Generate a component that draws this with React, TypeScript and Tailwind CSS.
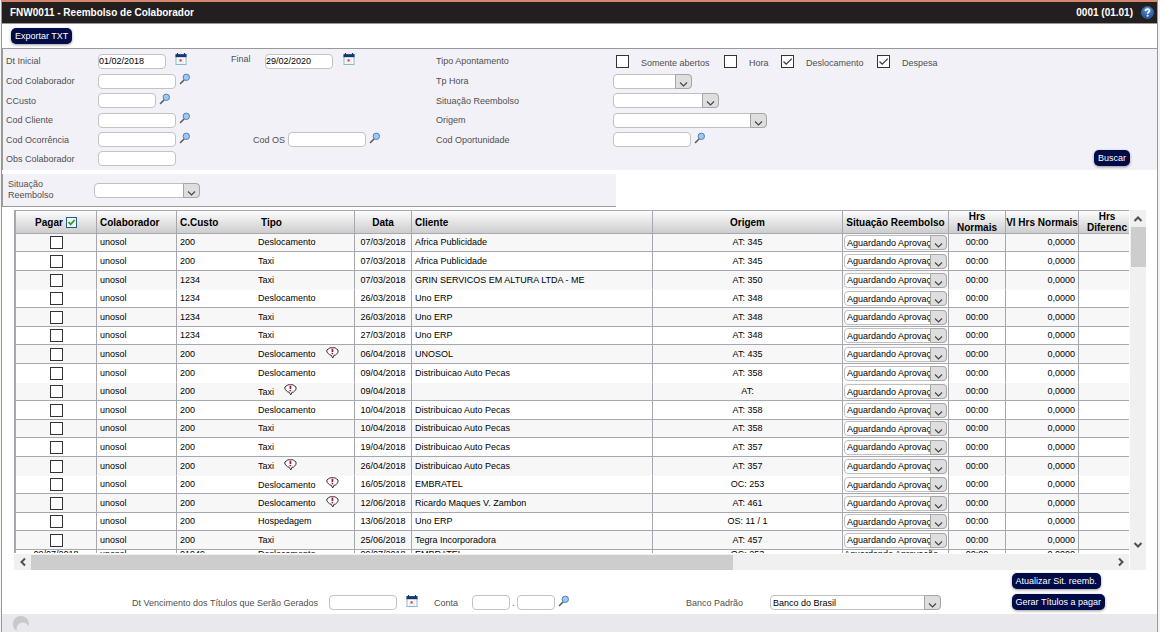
import React from 'react';
import clsx from 'clsx';

interface Lancamento {
  custo: string;
  tipo: string;
  alerta?: boolean;
  data: string;
  cliente: string;
  origem: string;
}

const lancamentos: Lancamento[] = [
  { custo: '200', tipo: 'Deslocamento', data: '07/03/2018', cliente: 'Africa Publicidade', origem: 'AT: 345' },
  { custo: '200', tipo: 'Taxi', data: '07/03/2018', cliente: 'Africa Publicidade', origem: 'AT: 345' },
  { custo: '1234', tipo: 'Taxi', data: '07/03/2018', cliente: 'GRIN SERVICOS EM ALTURA LTDA - ME', origem: 'AT: 350' },
  { custo: '1234', tipo: 'Deslocamento', data: '26/03/2018', cliente: 'Uno ERP', origem: 'AT: 348' },
  { custo: '1234', tipo: 'Taxi', data: '26/03/2018', cliente: 'Uno ERP', origem: 'AT: 348' },
  { custo: '1234', tipo: 'Taxi', data: '27/03/2018', cliente: 'Uno ERP', origem: 'AT: 348' },
  { custo: '200', tipo: 'Deslocamento', alerta: true, data: '06/04/2018', cliente: 'UNOSOL', origem: 'AT: 435' },
  { custo: '200', tipo: 'Deslocamento', data: '09/04/2018', cliente: 'Distribuicao Auto Pecas', origem: 'AT: 358' },
  { custo: '200', tipo: 'Taxi', alerta: true, data: '09/04/2018', cliente: '', origem: 'AT:' },
  { custo: '200', tipo: 'Deslocamento', data: '10/04/2018', cliente: 'Distribuicao Auto Pecas', origem: 'AT: 358' },
  { custo: '200', tipo: 'Taxi', data: '10/04/2018', cliente: 'Distribuicao Auto Pecas', origem: 'AT: 358' },
  { custo: '200', tipo: 'Taxi', data: '19/04/2018', cliente: 'Distribuicao Auto Pecas', origem: 'AT: 357' },
  { custo: '200', tipo: 'Taxi', alerta: true, data: '26/04/2018', cliente: 'Distribuicao Auto Pecas', origem: 'AT: 357' },
  { custo: '200', tipo: 'Deslocamento', alerta: true, data: '16/05/2018', cliente: 'EMBRATEL', origem: 'OC: 253' },
  { custo: '200', tipo: 'Deslocamento', alerta: true, data: '12/06/2018', cliente: 'Ricardo Maques V. Zambon', origem: 'AT: 461' },
  { custo: '200', tipo: 'Hospedagem', data: '13/06/2018', cliente: 'Uno ERP', origem: 'OS: 11 / 1' },
  { custo: '200', tipo: 'Taxi', data: '25/06/2018', cliente: 'Tegra Incorporadora', origem: 'AT: 457' },
];

const LupaIcon = () => (
  <svg width="12" height="12" viewBox="0 0 12 12" className="block">
    <path d="M4.8 7.2 1.500 10.500" stroke="#5b5b5b" strokeWidth="1.6" strokeLinecap="round" />
    <circle cx="7.3" cy="4.3" r="3.2" fill="#9cc8f4" stroke="#5580b5" strokeWidth="1" />
  </svg>
);

const CalendarioIcon = () => (
  <svg width="12" height="12" viewBox="0 0 12 12" className="block">
    <rect x="1" y="1.5" width="10" height="10" fill="#fbfdff" stroke="#8fb4d4" />
    <path d="M.5 1.2h11v3H.5z" fill="#14386b" />
    <path d="M2.5 0v2M9.5 0v2" stroke="#14386b" strokeWidth="1.2" />
    <path d="M3 6.5h6M3 8.5h6M3 10h6" stroke="#cfe0ee" strokeWidth=".6" />
    <rect x="4.6" y="6.4" width="2" height="2" fill="#c8372d" />
  </svg>
);

const AlertaIcon = () => (
  <svg width="13" height="12" viewBox="0 0 13 12" className="block">
    <path d="M4 .8h5l3 2.2v2.6L9.3 8.2H8L6.8 11 5.2 8.2 3.6 7.8.9 5.2V3z" fill="#fff" stroke="#3a3033" strokeWidth="1" strokeLinejoin="round" />
    <path d="M6.4 1.9v3.2" stroke="#b01030" strokeWidth="1.7" />
    <path d="M6.4 6v1.3" stroke="#b01030" strokeWidth="1.6" />
  </svg>
);

const AjudaIcon = () => (
  <svg width="13" height="13" viewBox="0 0 13 13" className="block">
    <defs>
      <radialGradient id="ajuda" cx="50%" cy="25%" r="75%">
        <stop offset="0" stopColor="#5f9ad6" />
        <stop offset="1" stopColor="#1c4f94" />
      </radialGradient>
    </defs>
    <circle cx="6.5" cy="6.5" r="6" fill="url(#ajuda)" stroke="#3c6cab" strokeWidth=".8" />
    <path d="M4.5 5c0-1.2.8-1.9 2-1.9s2 .7 2 1.700c0 1.3-1.900 1.400-1.900 3" fill="none" stroke="#fff" strokeWidth="1.7" />
    <circle cx="6.6" cy="9.7" r="1" fill="#fff" />
  </svg>
);

const Seta = ({ d }: { d: string }) => (
  <svg width="10" height="10" viewBox="0 0 10 10" className="block">
    <path d={d} fill="none" stroke="#505050" strokeWidth="2" />
  </svg>
);

const Campo = ({ className, ...props }: React.InputHTMLAttributes<HTMLInputElement>) => (
  <input
    type="text"
    className={clsx('h-[15px] rounded border border-[#c3c3c3] bg-white text-[9px] leading-3 text-black', className)}
    {...props}
  />
);

const Combo = ({ id, label, className, opcao = '' }: { id?: string; label?: string; className: string; opcao?: string }) => (
  <span className={clsx('relative block h-[15px]', className)}>
    <select
      id={id}
      aria-label={label}
      className="block h-[15px] w-full appearance-none overflow-hidden rounded border border-[#c0c0c0] bg-white pl-[2px] text-[9px] leading-3 text-black"
    >
      <option>{opcao}</option>
    </select>
    <span className="pointer-events-none absolute inset-y-0 right-0 flex w-[17px] items-end justify-center rounded-r-sm border border-[#a6a6a6] bg-[#dedede]">
      <svg width="9" height="7" viewBox="0 0 9 7">
        <path d="M1 1.5 4.5 5 8 1.5" fill="none" stroke="#444" strokeWidth="1.1" />
      </svg>
    </span>
  </span>
);

const Marca = ({ id, label, marcado }: { id?: string; label?: string; marcado?: boolean }) => (
  <span className="relative block size-[13px] shrink-0">
    <input
      id={id}
      aria-label={label}
      type="checkbox"
      defaultChecked={marcado}
      className="peer block size-[13px] appearance-none border border-[#333] bg-white"
    />
    <svg viewBox="0 0 13 13" className="pointer-events-none absolute inset-0 hidden peer-checked:block">
      <path d="M2.5 6.5 5.2 9.2 10.8 3.6" fill="none" stroke="#333" strokeWidth="1.2" />
    </svg>
  </span>
);

const Botao = ({ children, className }: { children: React.ReactNode; className?: string }) => (
  <button
    type="button"
    className={clsx('h-4 rounded-[5px] bg-[#000b47] px-1 text-[9px] leading-4 whitespace-nowrap text-white shadow-[0_1px_3px_rgba(0,0,0,0.4)]', className)}
  >
    {children}
  </button>
);

const BotaoIcone = ({ label, children, className }: { label: string; children: React.ReactNode; className?: string }) => (
  <button type="button" aria-label={label} className={clsx('shrink-0 pb-1', className)}>
    {children}
  </button>
);

const Filtros = () => (
  <section className="flex border-t border-l border-[#999] bg-[#f1f1f7] py-[2px] pl-[3px]">
    <div className="grid w-[430px] shrink-0 grid-rows-[20px_20px_19px_20px_19px_19px]">
      <div className="flex items-center">
        <div className="flex w-[225px] items-center">
          <label htmlFor="dtInicial" className="w-[92px]">Dt Inicial</label>
          <Campo id="dtInicial" defaultValue="01/02/2018" className="w-[68px]" />
          <BotaoIcone label="Calendário" className="ml-[9px]"><CalendarioIcon /></BotaoIcone>
        </div>
        <label htmlFor="dtFinal" className="w-[34px] pb-1">Final</label>
        <Campo id="dtFinal" defaultValue="29/02/2020" className="w-[68px]" />
        <BotaoIcone label="Calendário" className="ml-[10px]"><CalendarioIcon /></BotaoIcone>
      </div>
      <div className="flex items-center">
        <label htmlFor="colaborador" className="w-[92px]">Cod Colaborador</label>
        <Campo id="colaborador" className="w-[78px]" />
        <BotaoIcone label="Pesquisar" className="ml-[3px]"><LupaIcon /></BotaoIcone>
      </div>
      <div className="flex items-center">
        <label htmlFor="ccusto" className="w-[92px]">CCusto</label>
        <Campo id="ccusto" className="w-[58px]" />
        <BotaoIcone label="Pesquisar" className="ml-[3px]"><LupaIcon /></BotaoIcone>
      </div>
      <div className="flex items-center">
        <label htmlFor="cliente" className="w-[92px]">Cod Cliente</label>
        <Campo id="cliente" className="w-[78px]" />
        <BotaoIcone label="Pesquisar" className="ml-[3px]"><LupaIcon /></BotaoIcone>
      </div>
      <div className="flex items-center">
        <div className="flex w-[225px] items-center">
          <label htmlFor="ocorrencia" className="w-[92px]">Cod Ocorrência</label>
          <Campo id="ocorrencia" className="w-[78px]" />
          <BotaoIcone label="Pesquisar" className="ml-[3px]"><LupaIcon /></BotaoIcone>
        </div>
        <label htmlFor="codOs" className="w-[57px] pr-[3px] text-right">Cod OS</label>
        <Campo id="codOs" className="w-[78px]" />
        <BotaoIcone label="Pesquisar" className="ml-[3px]"><LupaIcon /></BotaoIcone>
      </div>
      <div className="flex items-center">
        <label htmlFor="obs" className="w-[92px]">Obs Colaborador</label>
        <Campo id="obs" className="w-[78px]" />
      </div>
    </div>

    <div className="grid grid-rows-[20px_20px_19px_20px_19px_19px]">
      <div className="flex items-center">
        <span className="w-[180px]">Tipo Apontamento</span>
        <div className="flex w-[108px] items-center gap-3">
          <Marca id="abertos" />
          <label htmlFor="abertos" className="pt-1">Somente abertos</label>
        </div>
        <div className="flex w-[57px] items-center gap-3">
          <Marca id="hora" />
          <label htmlFor="hora" className="pt-1">Hora</label>
        </div>
        <div className="flex w-[96px] items-center gap-3">
          <Marca id="deslocamento" marcado />
          <label htmlFor="deslocamento" className="pt-1">Deslocamento</label>
        </div>
        <div className="flex items-center gap-3">
          <Marca id="despesa" marcado />
          <label htmlFor="despesa" className="pt-1">Despesa</label>
        </div>
      </div>
      <div className="flex items-center">
        <label htmlFor="tpHora" className="w-[177px]">Tp Hora</label>
        <Combo id="tpHora" className="w-[79px]" />
      </div>
      <div className="flex items-center">
        <label htmlFor="situacao" className="w-[177px]">Situação Reembolso</label>
        <Combo id="situacao" className="w-[106px]" />
      </div>
      <div className="flex items-center">
        <label htmlFor="origem" className="w-[177px]">Origem</label>
        <Combo id="origem" className="w-[154px]" />
      </div>
      <div className="flex items-center">
        <label htmlFor="oportunidade" className="w-[177px]">Cod Oportunidade</label>
        <Campo id="oportunidade" className="w-[78px]" />
        <BotaoIcone label="Pesquisar" className="ml-[3px]"><LupaIcon /></BotaoIcone>
      </div>
    </div>

    <Botao className="mr-[27px] mb-[2px] ml-auto self-end">Buscar</Botao>
  </section>
);

const th = 'border-y border-r border-[#a5a8ae] p-0 text-[10px] leading-[11px] font-bold';
const td = 'border-r border-b p-0 border-r-[#a5a8ae]';

const Tabela = () => (
  <div className="mt-[3px] mr-[11px] ml-3 grid grid-cols-[minmax(0,1fr)_16px] gap-px">
    <div className="h-[343px] overflow-hidden border-l-2 border-[#a5a8ae]">
      <table className="w-full min-w-[1120px] table-fixed border-separate border-spacing-0 text-[9px] leading-3 whitespace-nowrap text-black">
        <colgroup>
          <col className="w-[81px]" />
          <col className="w-[80px]" />
          <col className="w-[78px]" />
          <col className="w-[100px]" />
          <col className="w-[57px]" />
          <col className="w-[241px]" />
          <col className="w-[190px]" />
          <col className="w-[106px]" />
          <col className="w-[57px]" />
          <col className="w-[73px]" />
          <col className="w-[57px]" />
        </colgroup>
        <thead>
          <tr className="h-6 bg-linear-to-b from-white to-[#cbcbcb]">
            <th className={th}>
              <div className="flex items-center justify-center gap-[3px]">
                <label htmlFor="pagarTodos">Pagar</label>
                <span className="relative block size-[11px]">
                  <input id="pagarTodos" type="checkbox" defaultChecked className="peer block size-[11px] appearance-none border border-[#2c5a86] bg-[#f4f8f4]" />
                  <svg viewBox="0 0 11 11" className="pointer-events-none absolute inset-0 hidden peer-checked:block">
                    <path d="M2.5 5 4.6 7.4 8.6 3" fill="none" stroke="#21a121" strokeWidth="1.8" />
                  </svg>
                </span>
              </div>
            </th>
            <th className={clsx(th, 'pl-[3px] text-left')}>Colaborador</th>
            <th className={clsx(th, 'border-r-0 pl-[3px] text-left')}>C.Custo</th>
            <th className={clsx(th, 'pl-[6px] text-left')}>Tipo</th>
            <th className={th}>Data</th>
            <th className={clsx(th, 'pl-[3px] text-left')}>Cliente</th>
            <th className={th}>Origem</th>
            <th className={th}>Situação Reembolso</th>
            <th className={th}>Hrs<br />Normais</th>
            <th className={th}>Vl Hrs Normais</th>
            <th className={th}>Hrs<br />Diferenc</th>
          </tr>
        </thead>
        <tbody>
          {lancamentos.map((l, i) => {
            const cell = clsx(td, i % 5 === 2 ? 'border-b-transparent' : 'border-b-[#a5a8ae]');
            const texto = clsx(cell, 'pb-px');
            return (
              <tr key={i} className={clsx(i % 2 === 0 && 'bg-[#f7f7f7]', i % 5 === 0 || i % 5 === 3 ? 'h-[18px]' : 'h-[19px]')}>
                <td className={cell}>
                  <div className="flex justify-center"><Marca label="Pagar" /></div>
                </td>
                <td className={clsx(texto, 'pl-[3px]')}>unosol</td>
                <td className={clsx(texto, 'border-r-0 pl-[3px]')}>{l.custo}</td>
                <td className={clsx(l.alerta ? cell : texto, 'pl-[3px]')}>
                  <div className="flex items-center gap-[10px]">
                    {l.tipo}
                    {l.alerta && <span className="pb-[3px]"><AlertaIcon /></span>}
                  </div>
                </td>
                <td className={clsx(texto, 'text-center')}>{l.data}</td>
                <td className={clsx(texto, 'pl-[3px]')}>{l.cliente}</td>
                <td className={clsx(texto, 'text-center')}>{l.origem}</td>
                <td className={cell}><Combo label="Situação" className="mx-px" opcao="Aguardando Aprovação" /></td>
                <td className={clsx(texto, 'text-center')}>00:00</td>
                <td className={clsx(texto, 'pr-[3px] text-right')}>0,0000</td>
                <td className={cell} />
              </tr>
            );
          })}
          <tr className="align-top leading-[9px]">
            <td className={clsx(td, 'text-center')}>09/07/2018</td>
            <td className={clsx(td, 'pl-[3px]')}>unosol</td>
            <td className={clsx(td, 'border-r-0 pl-[3px]')}>01949</td>
            <td className={clsx(td, 'pl-[3px]')}>Deslocamento</td>
            <td className={clsx(td, 'text-center')}>09/07/2018</td>
            <td className={clsx(td, 'pl-[3px]')}>EMBRATEL</td>
            <td className={clsx(td, 'text-center')}>OC: 253</td>
            <td className={clsx(td, 'pl-px')}>Aguardando Aprovação</td>
            <td className={clsx(td, 'text-center')}>00:00</td>
            <td className={clsx(td, 'pr-[3px] text-right')}>0,0000</td>
            <td className={td} />
          </tr>
        </tbody>
      </table>
    </div>

    {/* Barra de rolagem vertical */}
    <div className="row-span-2 flex flex-col items-center bg-[#f0f0f0] pb-5">
      <div className="flex h-[17px] items-center"><Seta d="M1.5 7 5 3.5 8.5 7" /></div>
      <div className="h-10 w-[15px] bg-[#cdcdcd]" />
      <div className="mt-auto"><Seta d="M1.5 3 5 6.5 8.5 3" /></div>
    </div>

    {/* Barra de rolagem horizontal */}
    <div className="flex h-4 items-center bg-[#f0f0f0]">
      <div className="flex w-[17px] justify-center"><Seta d="M7 1.5 3.5 5 7 8.5" /></div>
      <div className="h-[15px] w-[63%] bg-[#cdcdcd]" />
      <div className="ml-auto flex w-[17px] justify-center"><Seta d="M3 1.5 6.5 5 3 8.5" /></div>
    </div>
  </div>
);

const Rodape = () => (
  <section className="flex items-end pt-[3px] pb-1 pl-[130px]">
    <div className="flex h-[15px] items-center">
      <label htmlFor="vencimento" className="w-[197px]">Dt Vencimento dos Títulos que Serão Gerados</label>
      <Campo id="vencimento" className="w-[68px]" />
      <BotaoIcone label="Calendário" className="ml-[9px]"><CalendarioIcon /></BotaoIcone>
      <label htmlFor="conta" className="ml-4 w-[38px]">Conta</label>
      <Campo id="conta" className="w-[38px]" />
      <span className="w-[7px] text-center">.</span>
      <Campo aria-label="Dígito da conta" className="w-[38px]" />
      <BotaoIcone label="Pesquisar" className="ml-[3px]"><LupaIcon /></BotaoIcone>
      <label htmlFor="banco" className="ml-[116px] w-[84px]">Banco Padrão</label>
      <Combo id="banco" className="w-[171px]" opcao="Banco do Brasil" />
    </div>
    <div className="mr-[52px] ml-auto flex flex-col items-start gap-[5px]">
      <Botao>Atualizar Sit. reemb.</Botao>
      <Botao>Gerar Títulos a pagar</Botao>
    </div>
  </section>
);

export default function App() {
  return (
    <div className="min-h-screen bg-[#f3f3f3] font-['Liberation_Sans',Arial,sans-serif] text-[9px] leading-3 text-[#505050]">
      <div className="mr-[2px] ml-px flex min-h-screen flex-col border-x border-[#999] bg-white">
        <header className="flex h-6 items-center justify-between border-t-2 border-b border-t-[#d5866c] border-b-[#999] bg-[#231f20] pr-[3px] pl-2 text-[10px] font-bold text-white">
          <h1>FNW0011 - Reembolso de Colaborador</h1>
          <div className="flex items-center gap-2">
            <span>0001 (01.01)</span>
            <button type="button" aria-label="Ajuda"><AjudaIcon /></button>
          </div>
        </header>

        <div className="flex h-6 items-center pl-[9px]">
          <Botao>Exportar TXT</Botao>
        </div>

        <Filtros />

        <section className="mt-1 flex h-[33px] w-full max-w-[614px] items-center border-b border-l border-[#999] bg-[#f1f1f7] pl-[5px]">
          <label htmlFor="situacaoLote" className="w-[86px] leading-[11px]">Situação<br />Reembolso</label>
          <Combo id="situacaoLote" className="w-[106px]" />
        </section>

        <Tabela />
        <Rodape />

        <footer className="mt-auto h-[18px] bg-[#e8e8ed] pt-[2px] pl-[11px]">
          <svg width="16" height="16" viewBox="0 0 16 16">
            <path d="M8 0a8 8 0 0 0-5.600 13.700L4 15a5.600 5.600 0 1 1 11.500-4.500A8 8 0 0 0 8 0z" fill="#c9c9cb" />
          </svg>
        </footer>
      </div>
    </div>
  );
}
